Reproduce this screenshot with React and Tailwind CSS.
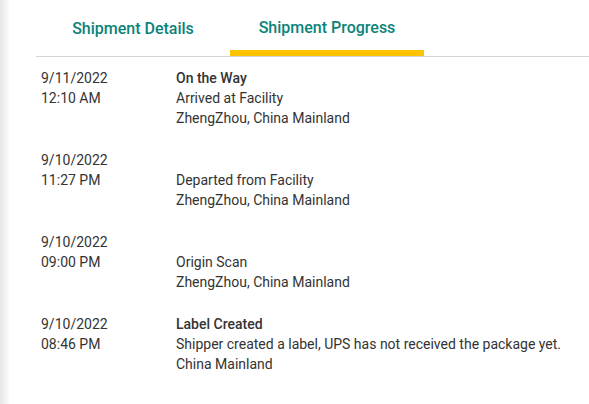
export default function App() {
  const rows = [
    { date: "9/11/2022", time: "12:10 AM", status: "On the Way", desc: "Arrived at Facility", loc: "ZhengZhou, China Mainland" },
    { date: "9/10/2022", time: "11:27 PM", status: "", desc: "Departed from Facility", loc: "ZhengZhou, China Mainland" },
    { date: "9/10/2022", time: "09:00 PM", status: "", desc: "Origin Scan", loc: "ZhengZhou, China Mainland" },
    { date: "9/10/2022", time: "08:46 PM", status: "Label Created", desc: "Shipper created a label, UPS has not received the package yet.", loc: "China Mainland" },
  ];
  return (
    <div className="flex w-[589px] h-[404px] bg-white overflow-hidden" style={{ fontFamily: "Roboto, 'Liberation Sans', sans-serif" }}>
      <div className="w-[9px] shrink-0 bg-gradient-to-r from-[#e6e6e6] to-[#fbfbfb]" />
      <div className="flex-1 pl-[27px] flex flex-col">
        <div className="flex border-b border-[#d4d4d4] h-[57px]">
          <div className="w-[194px] flex items-center justify-center pt-[2px] text-[16px] font-medium text-[#0b8379]">
            Shipment Details
          </div>
          <div className="w-[194px] flex flex-col">
            <div className="flex-1 flex items-center justify-center pt-[5px] text-[16px] font-medium text-[#0b8379]">
              Shipment Progress
            </div>
            <div className="h-[6px] bg-[#ffc400]" />
          </div>
        </div>
        <div className="pt-[11px] flex flex-col gap-[22px]">
          {rows.map((r, i) => (
            <div key={i} className="flex text-[14px] leading-[20px] text-[#333333]">
              <div className="w-[140px] pl-[5px] flex flex-col">
                <span>{r.date}</span>
                <span>{r.time}</span>
              </div>
              <div className="flex flex-col">
                <span className="font-medium h-[20px]">{r.status}</span>
                <span>{r.desc}</span>
                <span>{r.loc}</span>
              </div>
            </div>
          ))}
        </div>
      </div>
    </div>
  );
}
